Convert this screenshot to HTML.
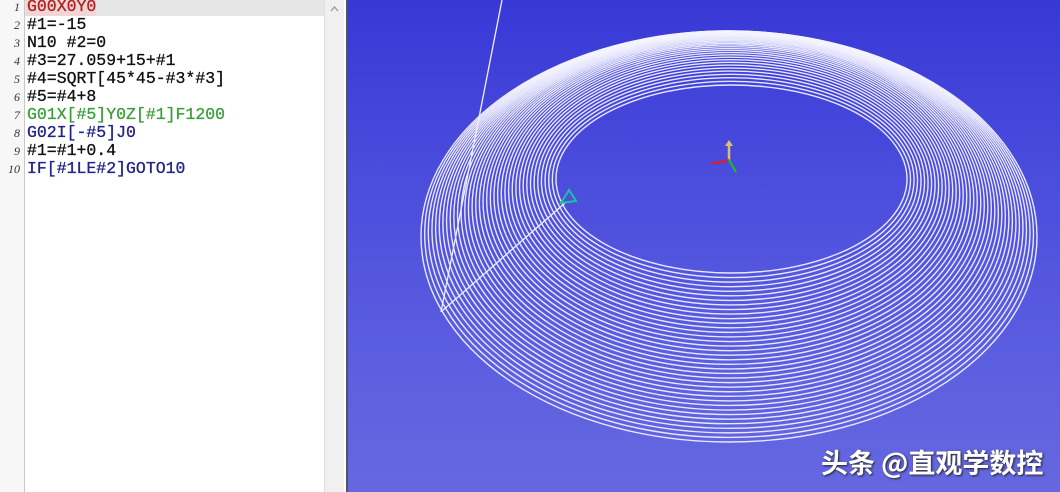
<!DOCTYPE html>
<html><head><meta charset="utf-8"><style>
html,body{margin:0;padding:0;width:1060px;height:492px;overflow:hidden;background:#fff}
#ed{position:absolute;left:0;top:0;width:324px;height:492px;background:#fff}
#gut{position:absolute;left:0;top:0;width:24px;height:492px;background:#f7f7f7;border-right:1px solid #c8c8c8}
.ln{position:absolute;left:0;width:20px;text-align:right;font:italic 12px "Liberation Serif",serif;color:#333}
.cl{position:absolute;left:27px;font:16.5px/18px "Liberation Mono",monospace;white-space:pre;-webkit-text-stroke:0.3px currentColor}
#sb{position:absolute;left:324px;top:0;width:19px;height:492px;background:#f0f0f0;border-left:1px solid #ddd}
#vp{position:absolute;left:346px;top:0;width:714px;height:492px;background:linear-gradient(180deg,#3838d6 0%,#4a4cdc 35%,#5a5de0 70%,#6668e0 100%);border-left:2px solid #555}
#wm{position:absolute;left:821px;top:442px;font:bold 27px "Noto Sans CJK SC",sans-serif;color:#fff;text-shadow:1px 1px 2px #222;letter-spacing:0px}
</style></head><body>
<div id="ed">
<div style="position:absolute;left:25px;top:0;width:299px;height:16px;background:#e6e6e6"></div>
<div style="position:absolute;left:26px;top:0;width:70px;height:16px;background:#f2d6d6"></div>
<div id="gut"></div>
<div class="ln" style="top:0">1</div><div class="ln" style="top:18px">2</div><div class="ln" style="top:36px">3</div><div class="ln" style="top:54px">4</div><div class="ln" style="top:72px">5</div><div class="ln" style="top:90px">6</div><div class="ln" style="top:108px">7</div><div class="ln" style="top:126px">8</div><div class="ln" style="top:144px">9</div><div class="ln" style="top:162px">10</div>
<div class="cl" style="top:-2px;color:#b02020">G00X0Y0</div>
<div class="cl" style="top:16px;color:#111">#1=-15</div>
<div class="cl" style="top:34px;color:#111">N10 #2=0</div>
<div class="cl" style="top:52px;color:#111">#3=27.059+15+#1</div>
<div class="cl" style="top:70px;color:#111">#4=SQRT[45*45-#3*#3]</div>
<div class="cl" style="top:88px;color:#111">#5=#4+8</div>
<div class="cl" style="top:106px;color:#3aa03a">G01X[#5]Y0Z[#1]F1200</div>
<div class="cl" style="top:124px;color:#22228a">G02I[-#5]J0</div>
<div class="cl" style="top:142px;color:#111">#1=#1+0.4</div>
<div class="cl" style="top:160px;color:#22228a">IF[#1LE#2]GOTO10</div>
</div>
<div id="sb"><svg width="19" height="14" style="position:absolute;top:2px;left:0"><path d="M6 9 L9.5 5 L13 9" fill="none" stroke="#999" stroke-width="1.3"/></svg></div>
<div id="vp"><svg id="s" width="714" height="492" viewBox="346 0 714 492" style="position:absolute;left:0;top:0"></svg></div>
<div id="wm">头条 @直观学数控</div>
<script>
var s=document.getElementById('s'),h='';
var N=38;
for(var i=0;i<N;i++){var u=i/(N-1);
var L=419+135*u,R=1035-130*u,B=442-169*u,T=31+54*Math.pow(u,2.6);
h+='<ellipse cx="'+((L+R)/2)+'" cy="'+((T+B)/2)+'" rx="'+((R-L)/2)+'" ry="'+((B-T)/2)+'" fill="none" stroke="#f4f4ff" stroke-width="1.4" opacity="0.92"/>';}
h+='<line x1="500" y1="0" x2="439" y2="312" stroke="#f0f0ff" stroke-width="1.3"/>';
h+='<line x1="440" y1="311" x2="563" y2="203" stroke="#f0f0ff" stroke-width="1.3"/>';
h+='<path d="M559 203 L567 190 L574 201 Z" fill="none" stroke="#20c0a0" stroke-width="2"/>';
h+='<line x1="727" y1="160" x2="727" y2="143" stroke="#d8c070" stroke-width="2.5"/><path d="M723 146 L727 140 L731 146Z" fill="#d8c070"/>';
h+='<line x1="727" y1="160" x2="709" y2="164" stroke="#d02040" stroke-width="2.5"/>';
h+='<line x1="727" y1="160" x2="734" y2="172" stroke="#20b040" stroke-width="2.5"/>';
s.innerHTML=h;
</script>
</body></html>
